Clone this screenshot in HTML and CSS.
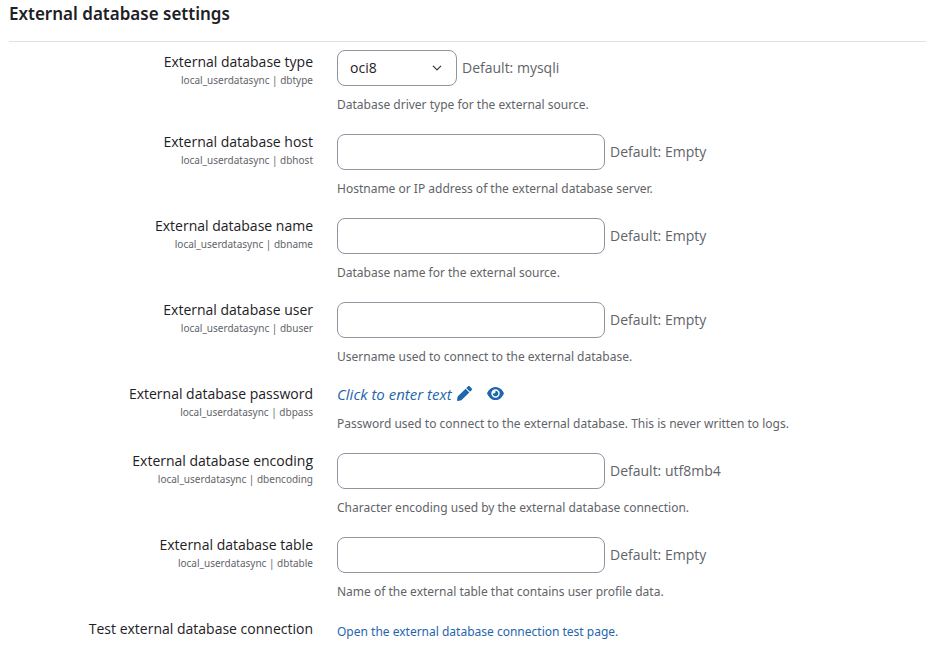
FILE: index.html
```html
<!DOCTYPE html>
<html lang="en">
<head>
    <meta charset="UTF-8">
    <meta name="viewport" content="width=device-width, initial-scale=1.0">
    <title>External database settings</title>
    <link rel="stylesheet" href="styles.css">
</head>
<body>
    <form class="settings">
        <h3>External database settings</h3>
        <div class="form-item">
            <div class="form-label">
                <label for="dbtype">External database type</label>
                <span class="shortname">local_userdatasync | dbtype</span>
            </div>
            <div class="form-setting">
                <div class="form-control">
                    <select id="dbtype" class="select">
                        <option>mysqli</option>
                        <option selected>oci8</option>
                        <option>pgsql</option>
                    </select>
                    <span class="default">Default: mysqli</span>
                </div>
                <p class="description">Database driver type for the external source.</p>
            </div>
        </div>
        <div class="form-item">
            <div class="form-label">
                <label for="dbhost">External database host</label>
                <span class="shortname">local_userdatasync | dbhost</span>
            </div>
            <div class="form-setting">
                <div class="form-control form-text">
                    <input type="text" id="dbhost" class="text">
                    <span class="default">Default: Empty</span>
                </div>
                <p class="description">Hostname or IP address of the external database server.</p>
            </div>
        </div>
        <div class="form-item">
            <div class="form-label">
                <label for="dbname">External database name</label>
                <span class="shortname">local_userdatasync | dbname</span>
            </div>
            <div class="form-setting">
                <div class="form-control form-text">
                    <input type="text" id="dbname" class="text">
                    <span class="default">Default: Empty</span>
                </div>
                <p class="description">Database name for the external source.</p>
            </div>
        </div>
        <div class="form-item">
            <div class="form-label">
                <label for="dbuser">External database user</label>
                <span class="shortname">local_userdatasync | dbuser</span>
            </div>
            <div class="form-setting">
                <div class="form-control form-text">
                    <input type="text" id="dbuser" class="text">
                    <span class="default">Default: Empty</span>
                </div>
                <p class="description">Username used to connect to the external database.</p>
            </div>
        </div>
        <div class="form-item">
            <div class="form-label">
                <span id="dbpass-label">External database password</span>
                <span class="shortname">local_userdatasync | dbpass</span>
            </div>
            <div class="form-setting">
                <div class="password" role="group" aria-labelledby="dbpass-label">
                    <a href="#" class="edit">
                        <em>Click to enter text</em>
                        <svg class="icon pen" viewBox="0 0 512 512" aria-hidden="true"><path d="M497.9 142.1l-46.1 46.1c-4.7 4.7-12.3 4.7-17 0l-111-111c-4.7-4.7-4.7-12.3 0-17l46.1-46.1c18.7-18.7 49.1-18.7 67.9 0l60.1 60.1c18.8 18.7 18.8 49.1 0 67.9zM284.2 99.8L21.6 362.4.4 483.9c-2.9 16.4 11.4 30.6 27.8 27.8l121.5-21.3 262.6-262.6c4.7-4.7 4.7-12.3 0-17l-111-111c-4.8-4.7-12.4-4.7-17.1 0z"/></svg>
                    </a>
                    <a href="#" class="reveal" aria-label="Reveal">
                        <svg class="icon eye" viewBox="0 0 576 512" aria-hidden="true"><path fill-rule="evenodd" d="M288 32c-81 0-146 37-193 81C48 156 17 208 3 244c-3 8-3 16 0 24 14 36 45 88 92 131 47 44 112 81 193 81s146-37 193-81c47-43 78-95 92-131 3-8 3-16 0-24-14-36-45-88-92-131-47-44-112-81-193-81zM144 256a144 144 0 1 1 288 0 144 144 0 1 1-288 0zM288 192c0 35-29 64-64 64-7 0-14-1-20-3-6-2-13 1-12 7 0 7 1 14 3 21 14 51 66 82 118 68s82-67 68-118c-11-42-48-70-89-71-6 0-9 6-7 12 2 6 3 13 3 20z"/></svg>
                    </a>
                </div>
                <p class="description">Password used to connect to the external database. This is never written to logs.</p>
            </div>
        </div>
        <div class="form-item">
            <div class="form-label">
                <label for="dbencoding">External database encoding</label>
                <span class="shortname">local_userdatasync | dbencoding</span>
            </div>
            <div class="form-setting">
                <div class="form-control form-text">
                    <input type="text" id="dbencoding" class="text">
                    <span class="default">Default: utf8mb4</span>
                </div>
                <p class="description">Character encoding used by the external database connection.</p>
            </div>
        </div>
        <div class="form-item">
            <div class="form-label">
                <label for="dbtable">External database table</label>
                <span class="shortname">local_userdatasync | dbtable</span>
            </div>
            <div class="form-setting">
                <div class="form-control form-text">
                    <input type="text" id="dbtable" class="text">
                    <span class="default">Default: Empty</span>
                </div>
                <p class="description">Name of the external table that contains user profile data.</p>
            </div>
        </div>
        <div class="form-item">
            <div class="form-label">
                <span>Test external database connection</span>
            </div>
            <div class="form-setting">
                <p class="test-link"><a href="#">Open the external database connection test page.</a></p>
            </div>
        </div>
    </form>
</body>
</html>
```

FILE: styles.css
```css
* { box-sizing: border-box; }
body { margin: 0; background: #fff; color: #1d2125; font-family: "Open Sans", "Noto Sans", sans-serif; font-size: 14px; line-height: 24px; }
a { color: #1f66ad; text-decoration: none; }
a:hover { text-decoration: underline; }
.settings { margin: 0 0 0 9px; }
h3 { margin: 0 0 8px; padding: 2px 0 15px; border-bottom: 1px solid #dee2e6; font-family: "Noto Sans", sans-serif; font-size: 17px; line-height: 24px; font-weight: 600; }
.form-item { display: grid; grid-template-columns: 304px 1fr; column-gap: 24px; margin-bottom: 15px; }
.form-label { display: flex; flex-direction: column; text-align: right; }
.shortname { color: #5f6469; font-family: "Noto Sans", sans-serif; font-size: 10px; line-height: 12px; }
.form-control { display: flex; align-items: center; gap: 5px; }
.form-text { padding-top: 4px; }
.select, .text { height: 36px; border: 1px solid #8f959e; border-radius: 8px; background-color: #fff; color: #1d2125; font: inherit; }
.text { width: 268px; padding: 6px 12px; }
.select {
    width: 120px;
    padding: 0 36px 0 12px;
    appearance: none;
    background-image: url("data:image/svg+xml,%3Csvg xmlns='http://www.w3.org/2000/svg' viewBox='0 0 16 16'%3E%3Cpath fill='none' stroke='%23343a40' stroke-width='2' stroke-linecap='round' stroke-linejoin='round' d='m2 5 6 6 6-6'/%3E%3C/svg%3E");
    background-repeat: no-repeat;
    background-position: right 14px center;
    background-size: 10px;
}
.default { color: #5f6469; }
.description, .test-link { margin: 0; font-family: "Noto Sans", sans-serif; font-size: 12px; line-height: 20px; }
.description { margin-top: 9px; color: #5f6469; }
.test-link { margin-top: 5px; }
.password { display: flex; align-items: center; gap: 15px; height: 23px; font-size: 15px; }
.edit { display: flex; align-items: center; gap: 5px; }
.reveal { display: flex; }
.icon { fill: currentColor; }
.pen { width: 15px; height: 15px; }
.eye { width: 17px; height: 15px; }
```
